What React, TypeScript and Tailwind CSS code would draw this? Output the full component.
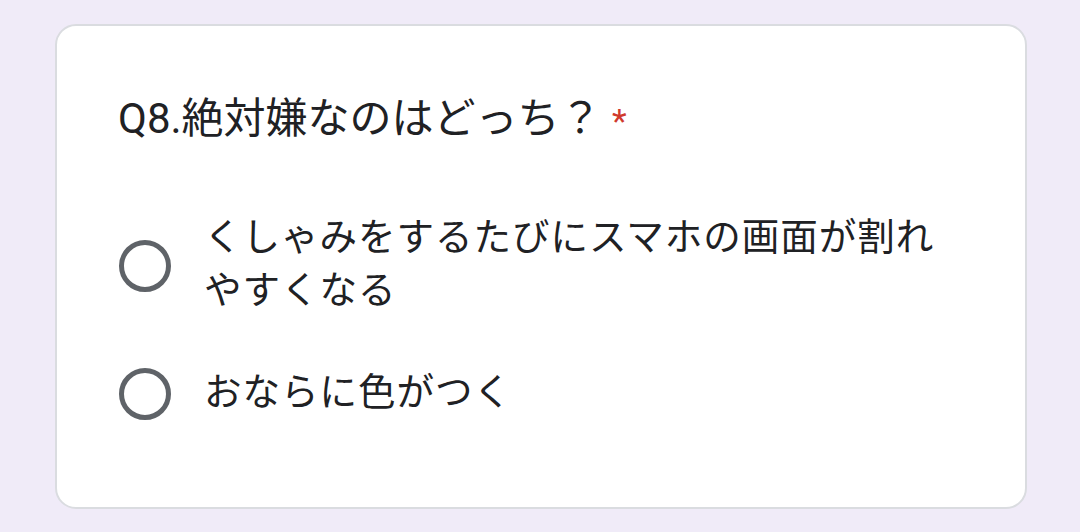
import React from "react";

const font = { fontFamily: '"Roboto", "Noto Sans CJK JP", sans-serif' };

function Option({ label }: { label: string }) {
  return (
    <div className="flex items-center py-[24px]">
      <div className="ml-[1px] mt-[4px] h-[52px] w-[52px] shrink-0 rounded-full border-[5px] border-[#5f6368]" />
      <div className="ml-[33px] flex-1 text-[37.5px] leading-[52.5px] tracking-[1px] text-[#202124]">
        {label}
      </div>
    </div>
  );
}

export default function App() {
  return (
    <div className="min-h-[532px] w-full bg-[#f0ebf8] pt-[24px]" style={font}>
      <div className="ml-[55px] w-[972px] rounded-[21px] border-2 border-[#dadce0] bg-white pl-[61px] pr-[63px] pt-[61px] pb-[63px]">
        <div className="mb-[37px] h-[63px] text-[42px] leading-[63px] text-[#202124]">
          Q8.絶対嫌なのはどっち？ <span className="text-[34px] leading-[0] text-[#d03a2c]">*</span>
        </div>
        <div className="flex flex-col">
          <Option label="くしゃみをするたびにスマホの画面が割れやすくなる" />
          <Option label="おならに色がつく" />
        </div>
      </div>
    </div>
  );
}
